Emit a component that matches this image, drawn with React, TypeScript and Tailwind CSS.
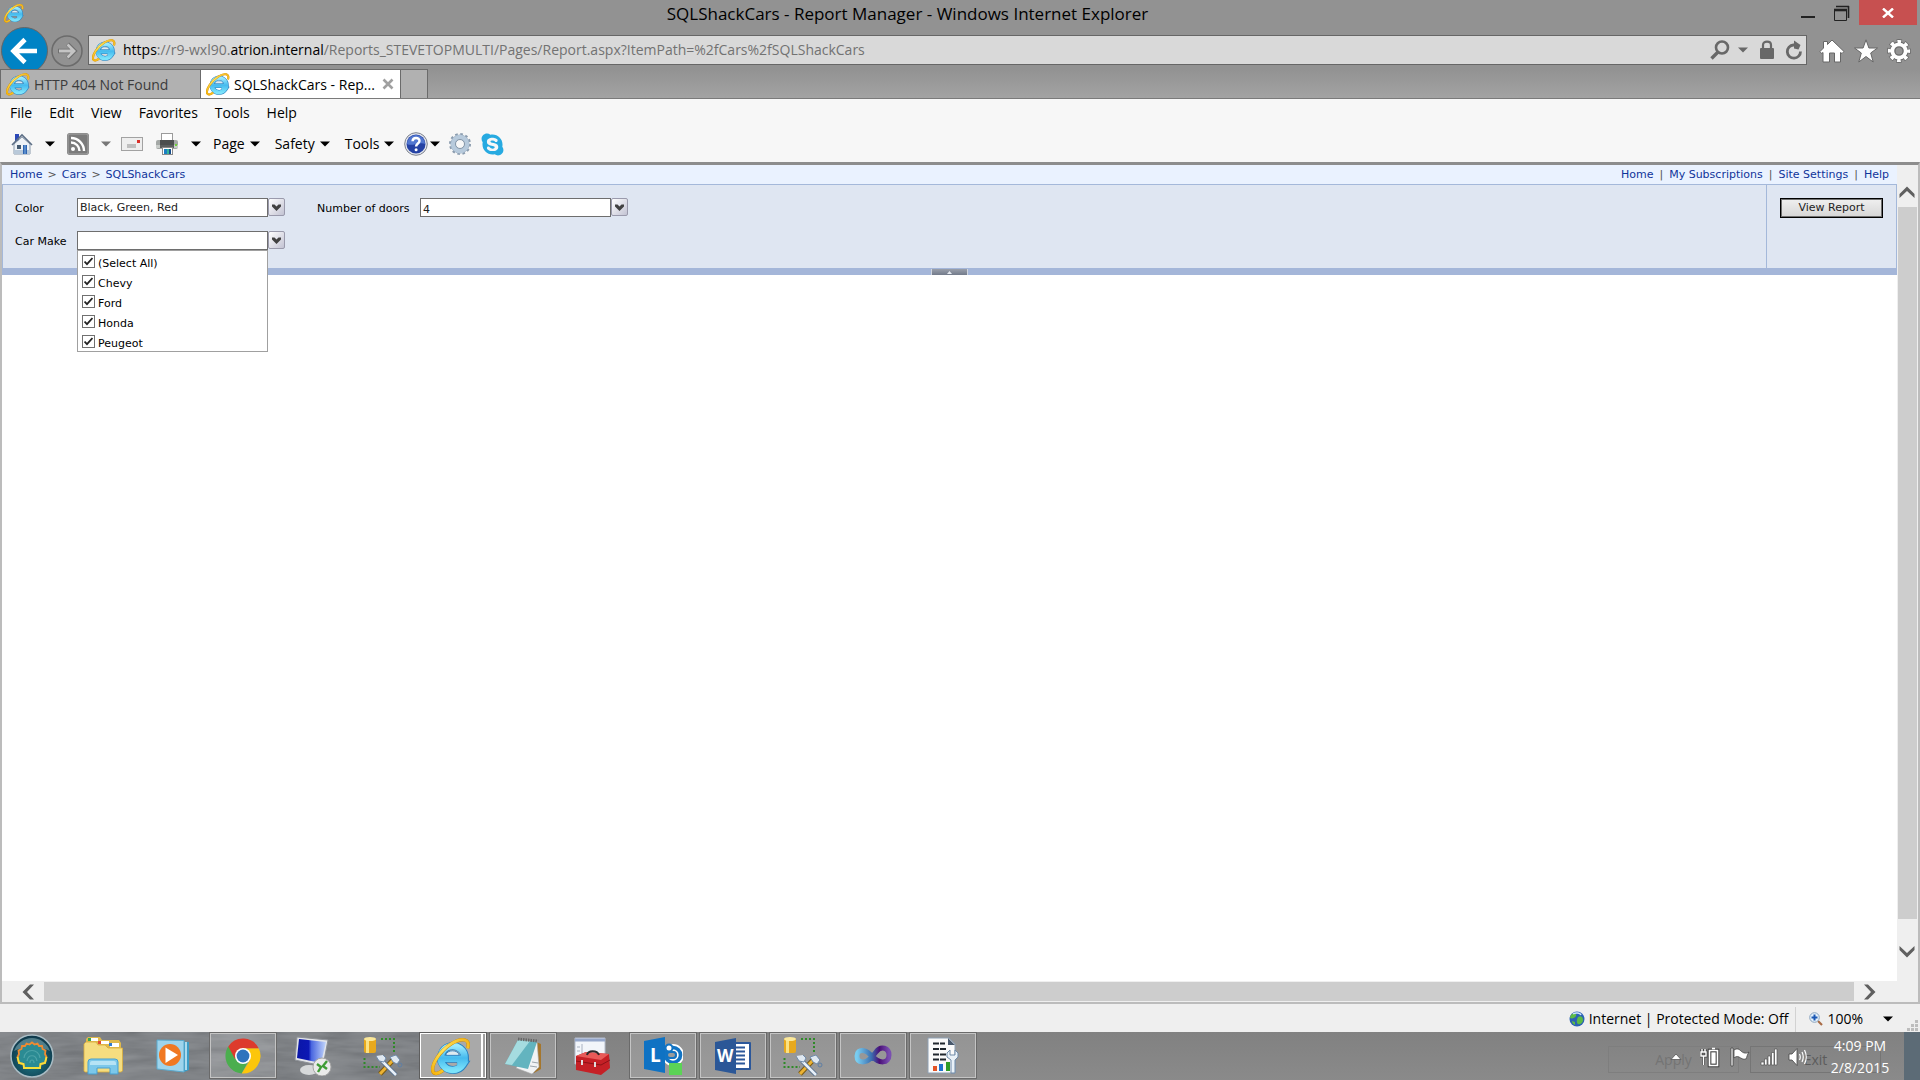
import { useState } from 'react';
import type { ReactNode } from 'react';
import { FaSkype } from 'react-icons/fa';

const MAKES = ['(Select All)', 'Chevy', 'Ford', 'Honda', 'Peugeot'];

function IeIcon({ className }: { className: string }) {
  return (
    <svg viewBox="0 0 24 24" fill="none" className={className} aria-hidden="true">
      <defs>
        <linearGradient id="ie-blue" x1="0" y1="0" x2="0" y2="1">
          <stop offset="0" stopColor="#9beafd" />
          <stop offset="0.5" stopColor="#45baee" />
          <stop offset="1" stopColor="#7be3fb" />
        </linearGradient>
        <linearGradient id="ie-gold" x1="0" y1="1" x2="1" y2="0">
          <stop offset="0" stopColor="#f6b30c" />
          <stop offset="0.5" stopColor="#ffe45c" />
          <stop offset="1" stopColor="#f3b51c" />
        </linearGradient>
      </defs>
      <path d="M6.5 13.6H20.4A7.2 7.2 0 1 0 19.2 17.2H15.5" stroke="#2a80bf" strokeWidth="4.8" />
      <path d="M6.5 13.6H20.2A7.2 7.2 0 1 0 19 17.2H15.7" stroke="url(#ie-blue)" strokeWidth="3.9" />
      <path d="M8.9 11.6C9.3 8 16.5 8 16.9 11.6Z" fill="#dfeaf0" stroke="#2a80bf" strokeWidth="0.5" />
      <path
        d="M22 7.4C23.8 1.4 18.4 0.8 12.2 4.6C5.2 9 -0.2 17.4 1.2 21.4C2 23.4 4.8 22.4 7.2 20.6"
        stroke="#c98a08"
        strokeWidth="2.1"
      />
      <path
        d="M22 7.4C23.8 1.4 18.4 0.8 12.2 4.6C5.2 9 -0.2 17.4 1.2 21.4C2 23.4 4.8 22.4 7.2 20.6"
        stroke="url(#ie-gold)"
        strokeWidth="1.7"
      />
    </svg>
  );
}

function Caret({ className = 'text-black' }: { className?: string }) {
  return (
    <svg viewBox="0 0 10 6" className={`h-[6px] w-[10px] shrink-0 ${className}`} aria-hidden="true">
      <path d="M0 0.5H10L5 5.5Z" fill="currentColor" />
    </svg>
  );
}

function HouseIcon() {
  return (
    <svg viewBox="0 0 22 22" className="h-[22px] w-[22px]" aria-hidden="true">
      <rect x="4" y="1" width="4" height="7" fill="#2c48b8" />
      <path d="M3 11L11 4L19 11V21H3Z" fill="#eef2f6" stroke="#8a9aac" />
      <path d="M3 17H19V21H3Z" fill="#b9c9d9" />
      <path d="M1 12L11 2L21 12" fill="none" stroke="#5d6f86" strokeWidth="1.6" />
      <rect x="6" y="12" width="4" height="4" fill="#445a70" />
      <rect x="12" y="12" width="4" height="9" fill="#2f64b0" />
      <path d="M14 12V21" stroke="#7fb0e6" />
    </svg>
  );
}

function FeedIcon() {
  return (
    <svg viewBox="0 0 22 22" fill="none" className="h-[22px] w-[22px]" aria-hidden="true">
      <rect width="22" height="22" rx="3" fill="#7b7b7b" />
      <rect x="1" y="1" width="20" height="20" rx="2" stroke="#a5a5a5" />
      <circle cx="6" cy="16" r="2" fill="#fff" />
      <path d="M4 9.5A8.5 8.5 0 0 1 12.5 18M4 5A13 13 0 0 1 17 18" stroke="#fff" strokeWidth="2.4" />
    </svg>
  );
}

function MailIcon() {
  return (
    <svg viewBox="0 0 22 16" className="h-[16px] w-[22px]" aria-hidden="true">
      <rect x="0.5" y="1.5" width="21" height="13" fill="#eeeeee" stroke="#a2a2a2" />
      <path d="M6 9H15M6 11H15" stroke="#8f8f8f" />
      <rect x="16" y="4" width="3" height="3" fill="#d9302a" />
    </svg>
  );
}

function PrinterIcon() {
  return (
    <svg viewBox="0 0 24 24" className="h-[24px] w-[24px]" aria-hidden="true">
      <rect x="6.5" y="1.5" width="11" height="9" fill="#fff" stroke="#9b9b9b" />
      <rect x="1" y="8" width="22" height="9" rx="2" fill="#a4a8a6" />
      <rect x="5" y="8" width="14" height="5" fill="#4b4e4f" />
      <rect x="1" y="13" width="22" height="3" fill="#c9cdca" />
      <rect x="5" y="13" width="14" height="3" fill="#5b5e5f" />
      <rect x="20" y="12" width="2" height="2" fill="#6fd13c" />
      <rect x="7.5" y="15.5" width="10" height="7" fill="#fff" stroke="#8a8a8a" />
      <path d="M9 17H12V22H9Z" fill="#1c7fc4" />
      <path d="M12 17H14V22H12Z" fill="#36b59a" />
      <path d="M14 17H16V22H14Z" fill="#174e8e" />
    </svg>
  );
}

function HelpIcon() {
  return (
    <svg viewBox="0 0 24 24" className="h-[24px] w-[24px]" aria-hidden="true">
      <circle cx="12" cy="12" r="11.3" fill="#e3e6ee" stroke="#7d828d" />
      <circle cx="12" cy="12" r="9.5" fill="#2542a4" />
      <path d="M3 12A9 9 0 0 1 21 12C16 9 8 15 3 12Z" fill="#5277d0" />
      <path d="M8.6 9.3C8.6 4.8 15.6 4.9 15.5 9C15.4 11.5 12.1 11.7 12.1 14.6" fill="none" stroke="#fff" strokeWidth="2.5" />
      <circle cx="12.1" cy="17.8" r="1.5" fill="#fff" />
    </svg>
  );
}

function SilverGear() {
  return (
    <svg viewBox="0 0 24 24" fill="none" className="h-[24px] w-[24px]" aria-hidden="true">
      <circle cx="12" cy="12" r="9.8" stroke="#8b9cae" strokeWidth="2.4" strokeDasharray="2.6 2.53" />
      <circle cx="12" cy="12" r="6.8" stroke="#91a5ba" strokeWidth="5.4" />
      <circle cx="12" cy="12" r="7" stroke="#b7cadc" strokeWidth="4.4" />
      <circle cx="12" cy="12" r="4.5" fill="#f7f7f7" stroke="#8496a8" />
    </svg>
  );
}

function WhiteGear() {
  return (
    <svg viewBox="0 0 24 24" fill="none" className="h-[24px] w-[24px]" aria-hidden="true">
      <circle cx="12" cy="12" r="9.5" stroke="#6a6a6a" strokeWidth="4.8" strokeDasharray="4.8 2.66" strokeDashoffset="2.4" />
      <circle cx="12" cy="12" r="6.5" stroke="#6a6a6a" strokeWidth="6" />
      <circle cx="12" cy="12" r="9.3" stroke="#fff" strokeWidth="3.6" strokeDasharray="3.6 3.704" strokeDashoffset="1.8" />
      <circle cx="12" cy="12" r="6.7" stroke="#fff" strokeWidth="3.8" />
    </svg>
  );
}

function ScrollArrow({ dir }: { dir: 'up' | 'down' | 'left' | 'right' }) {
  const turn = { up: '', down: 'rotate-180', left: '-rotate-90', right: 'rotate-90' }[dir];
  return (
    <svg viewBox="0 0 16 12" className={`h-[12px] w-[16px] ${turn}`} aria-hidden="true">
      <path d="M0.5 8L8 0.5L15.5 8V12L8 5L0.5 12Z" fill="#606060" />
    </svg>
  );
}

function TitleBar() {
  return (
    <header className="flex h-[35px] items-start bg-[#929292] pr-[3px] pl-1">
      <IeIcon className="mt-[3px] h-[20px] w-[20px]" />
      <h1 className="grow text-center text-[17px] leading-[28px] text-black">
        SQLShackCars - Report Manager - Windows Internet Explorer
      </h1>
      <button aria-label="Minimize" className="flex h-[25px] w-[34px] items-center justify-center">
        <svg viewBox="0 0 14 14" className="h-[14px] w-[14px]">
          <path d="M0 11H14" stroke="#222" strokeWidth="2" />
        </svg>
      </button>
      <button aria-label="Restore" className="flex h-[25px] w-[34px] items-center justify-center">
        <svg viewBox="0 0 16 16" fill="none" className="h-[16px] w-[16px]">
          <path d="M2 1.5H15M14.5 1V13" stroke="#222" strokeWidth="1.6" />
          <path d="M0.5 4V15.5H12.5V4" stroke="#222" />
          <path d="M0 5H13" stroke="#222" strokeWidth="2.6" />
        </svg>
      </button>
      <button aria-label="Close" className="flex h-[25px] w-[58px] items-center justify-center bg-[#c75050]">
        <svg viewBox="0 0 12 10" className="h-[10px] w-[12px]">
          <path d="M1 0.5L11 9.5M11 0.5L1 9.5" stroke="#fff" strokeWidth="2.4" />
        </svg>
      </button>
    </header>
  );
}

function AddressRow() {
  return (
    <div className="flex h-[34px] items-start bg-[#929292] pr-[9px]">
      <button aria-label="Back" className="-mt-2 ml-[1px] h-[42px] w-[47px] overflow-hidden">
        <svg viewBox="0 0 47 47" fill="none" className="h-[47px] w-[47px]">
          <circle cx="23.5" cy="23.5" r="23" fill="#0083c5" stroke="#656565" />
          <path d="M36 24H13M24 12.5L12.5 24L24 35.5" stroke="#fff" strokeWidth="4.6" />
        </svg>
      </button>
      <button aria-label="Forward" className="ml-[3px] h-[32px] w-[32px]">
        <svg viewBox="0 0 32 32" fill="none" className="h-[32px] w-[32px]">
          <circle cx="16" cy="16" r="15" stroke="#6b6b6b" strokeWidth="1.5" />
          <path d="M7 16H23M16.5 9L23.5 16L16.5 23" stroke="#6f6f6f" strokeWidth="4.4" />
          <path d="M8 16H23M16.5 9.5L23 16L16.5 22.5" stroke="#c4c4c4" strokeWidth="2.8" />
        </svg>
      </button>
      <div className="ml-[5px] flex h-[30px] grow items-center border border-[#666] bg-[#d9d9d9] pr-[3px] pl-[3px]">
        <IeIcon className="h-[24px] w-[24px] shrink-0" />
        <p className="ml-[7px] grow text-[14px] leading-[20px] text-[#727272]">
          <span className="text-black">https</span>://r9-wxl90.<span className="text-black">atrion.internal</span>
          /Reports_STEVETOPMULTI/Pages/Report.aspx?ItemPath=%2fCars%2fSQLShackCars
        </p>
        <button aria-label="Search">
          <svg viewBox="0 0 20 20" fill="none" className="h-[20px] w-[20px]">
            <circle cx="12" cy="7.5" r="6" stroke="#686868" strokeWidth="2.6" />
            <path d="M8 12L1.5 18.5" stroke="#686868" strokeWidth="3.4" />
          </svg>
        </button>
        <button aria-label="Search options" className="ml-2">
          <Caret className="text-[#686868]" />
        </button>
        <button aria-label="Security report" className="ml-3">
          <svg viewBox="0 0 14 20" fill="none" className="h-[20px] w-[14px]">
            <rect y="8" width="14" height="11" rx="1" fill="#686868" />
            <path d="M3 9V5C3 0.5 11 0.5 11 5V9" stroke="#686868" strokeWidth="2.2" />
          </svg>
        </button>
        <button aria-label="Refresh" className="ml-[11px]">
          <svg viewBox="0 0 18 20" fill="none" className="h-[20px] w-[18px]">
            <path d="M10 5H8.5A6.6 6.6 0 1 0 15.5 11.5" stroke="#686868" strokeWidth="2.8" />
            <path d="M9 0.5L15.5 5L13.5 9.5L9 8.5Z" fill="#686868" />
          </svg>
        </button>
      </div>
      <div className="ml-3 flex h-[32px] items-center gap-[9px]">
        <button aria-label="Home">
          <svg viewBox="0 0 26 24" className="h-[24px] w-[26px]">
            <path
              d="M13 1L25 12.5L23 14.5L21.5 13.5V23H15.5V14H10.5V23H4V13.5L2.5 14.5L1 12.5L4.5 9V2.5H8.5V5.5Z"
              fill="#fff"
              stroke="#666"
            />
          </svg>
        </button>
        <button aria-label="Favorites">
          <svg viewBox="0 0 24 24" className="h-[24px] w-[24px]">
            <path
              d="M12 0.8L14.9 9H23.5L16.7 14L19.2 23L12 17.5L4.8 23L7.3 14L0.5 9H9.1Z"
              fill="#fff"
              stroke="#666"
            />
          </svg>
        </button>
        <button aria-label="Tools">
          <WhiteGear />
        </button>
      </div>
    </div>
  );
}

function Tabs() {
  return (
    <div
      role="tablist"
      className="flex h-[30px] border-b border-[#7a7a7a] bg-linear-to-b from-[#929292] to-[#a3a3a3] text-[14px] whitespace-nowrap"
    >
      <button
        role="tab"
        aria-selected="false"
        className="flex w-[201px] items-center gap-1 border-t border-r border-l border-[#6b6b6b] bg-[#b1b1b1] pl-[5px] text-[#3c3c3c]"
      >
        <IeIcon className="h-[24px] w-[24px]" />
        HTTP 404 Not Found
      </button>
      <div className="flex w-[199px] items-center border-t border-[#6b6b6b] bg-white pl-[5px] text-black">
        <button role="tab" aria-selected="true" className="flex items-center gap-1">
          <IeIcon className="h-[24px] w-[24px]" />
          SQLShackCars - Rep...
        </button>
        <button aria-label="Close tab" className="mr-[6px] ml-auto">
          <svg viewBox="0 0 12 12" className="h-[12px] w-[12px]">
            <path d="M1.5 1.5L10.5 10.5M10.5 1.5L1.5 10.5" stroke="#a0a0a0" strokeWidth="2.6" />
          </svg>
        </button>
      </div>
      <button aria-label="New tab" className="w-[28px] border-t border-r border-l border-[#6b6b6b] bg-[#b1b1b1]" />
    </div>
  );
}

function CommandBars() {
  return (
    <div className="h-[63px] bg-[#f7f7f7] text-[14px] leading-[20px] text-black">
      <nav className="flex gap-[17px] px-[10px] pt-1">
        {['File', 'Edit', 'View', 'Favorites', 'Tools', 'Help'].map((item) => (
          <button key={item}>{item}</button>
        ))}
      </nav>
      <div className="mt-2 flex h-[26px] items-center pl-[11px]">
        <button aria-label="Home page" className="flex items-center gap-3">
          <HouseIcon />
          <Caret />
        </button>
        <button aria-label="Feeds" className="ml-3 flex items-center gap-3">
          <FeedIcon />
          <Caret className="text-[#777]" />
        </button>
        <button aria-label="Read mail" className="ml-[10px]">
          <MailIcon />
        </button>
        <button aria-label="Print" className="ml-3 flex items-center gap-3">
          <PrinterIcon />
          <Caret />
        </button>
        <div className="ml-3 flex gap-[15px]">
          {['Page', 'Safety', 'Tools'].map((item) => (
            <button key={item} className="flex items-center gap-[5px]">
              {item}
              <Caret />
            </button>
          ))}
        </div>
        <button aria-label="Help" className="ml-[10px] flex items-center gap-[2px]">
          <HelpIcon />
          <Caret />
        </button>
        <button aria-label="Developer tools" className="ml-2">
          <SilverGear />
        </button>
        <button aria-label="Skype" className="ml-2">
          <FaSkype className="h-[25px] w-[25px] text-[#27aae1]" />
        </button>
      </div>
    </div>
  );
}

function DropButton({ label, onClick }: { label: string; onClick?: () => void }) {
  return (
    <button
      aria-label={label}
      onClick={onClick}
      className="flex h-[18px] w-[17px] items-center justify-center rounded-[2px] border border-[#9a9aac] bg-linear-to-br from-white to-[#c3c3d3]"
    >
      <svg viewBox="0 0 9 7" className="h-[7px] w-[9px]">
        <path d="M0 0.5H2.5L4.5 2.5L6.5 0.5H9V2.5L4.5 7L0 2.5Z" fill="#414141" />
      </svg>
    </button>
  );
}

function MakeList() {
  const [checked, setChecked] = useState<Record<string, boolean>>({});
  return (
    <div className="absolute top-[19px] left-0 z-10 w-[191px] border border-[#a0a0a0] bg-white pl-1">
      {MAKES.map((make) => {
        const on = checked[make] ?? true;
        return (
          <label key={make} className="flex h-[20px] items-start gap-[3px] pt-1">
            <span className="relative flex h-[13px] w-[13px] items-center justify-center">
              <input
                type="checkbox"
                checked={on}
                onChange={(e) => setChecked({ ...checked, [make]: e.target.checked })}
                className="h-[13px] w-[13px] appearance-none border border-[#707070] bg-white"
              />
              {on && (
                <svg viewBox="0 0 9 9" fill="none" className="pointer-events-none absolute h-[9px] w-[9px]">
                  <path d="M0.5 4.5L3 7.2L8.5 1" stroke="#222" strokeWidth="1.8" />
                </svg>
              )}
            </span>
            <span className="leading-[17px]">{make}</span>
          </label>
        );
      })}
    </div>
  );
}

function Parameters() {
  const [open, setOpen] = useState(true);
  const field = 'h-[19px] w-[191px] appearance-none border border-[#6e6e6e] bg-white px-[2px] text-[#222] outline-none';
  return (
    <section className="flex border-x border-t border-[#a4b8da] bg-[#dfe6f2] text-black">
      <div className="grid h-[83px] grow auto-rows-[19px] grid-cols-[62px_209px_134px_auto] content-start justify-start gap-y-[14px] pt-[13px] pl-3 leading-[21px]">
        <label htmlFor="color">Color</label>
        <div className="flex">
          <input id="color" readOnly value="Black, Green, Red" className={field} />
          <DropButton label="Choose colors" />
        </div>
        <label htmlFor="doors" className="pl-[31px] whitespace-nowrap">
          Number of doors
        </label>
        <div className="flex">
          <select id="doors" defaultValue="4" className={field}>
            <option>2</option>
            <option>4</option>
          </select>
          <DropButton label="Choose number of doors" />
        </div>
        <label htmlFor="make">Car Make</label>
        <div className="relative flex">
          <input id="make" readOnly value="" className={field} />
          <DropButton label="Choose car makes" onClick={() => setOpen(!open)} />
          {open && <MakeList />}
        </div>
      </div>
      <div className="w-[130px] border-l border-[#a4b8da] pt-[13px] pl-[13px]">
        <button className="h-[20px] w-[103px] border border-black bg-linear-to-b from-[#f0f0f0] to-[#d6d6d6] leading-[18px] text-[#222] outline-1 -outline-offset-2 outline-[#707070]">
          View Report
        </button>
      </div>
    </section>
  );
}

function ReportPage() {
  return (
    <main className="flex min-w-0 grow flex-col bg-white font-['DejaVu_Sans',Verdana,sans-serif] text-[11px] leading-[19px]">
      <div className="flex justify-between bg-[#eaf2ff] px-2 text-[#555]">
        <nav className="flex gap-[5px]">
          <a href="#home" className="text-[#10349a]">Home</a>&gt;
          <a href="#cars" className="text-[#10349a]">Cars</a>&gt;
          <a href="#report" className="text-[#10349a]">SQLShackCars</a>
        </nav>
        <nav className="flex gap-[6px]">
          <a href="#home" className="text-[#10349a]">Home</a>|
          <a href="#subscriptions" className="text-[#10349a]">My Subscriptions</a>|
          <a href="#settings" className="text-[#10349a]">Site Settings</a>|
          <a href="#help" className="text-[#10349a]">Help</a>
        </nav>
      </div>
      <Parameters />
      <div className="flex h-[7px] justify-center bg-[#a4b6d9]">
        <button
          aria-label="Hide parameters"
          className="flex h-[6px] w-[37px] items-center justify-center self-end border-x border-[#d0d6e0] bg-linear-to-b from-[#9aa0ac] to-[#737b8b]"
        >
          <svg viewBox="0 0 5 3" className="h-[3px] w-[5px]">
            <path d="M0 3L2.5 0L5 3Z" fill="#e5e9f0" />
          </svg>
        </button>
      </div>
    </main>
  );
}

function StatusBar() {
  return (
    <footer className="flex h-[28px] items-center justify-end bg-[#efefef] pt-[2px] text-[14px] leading-[20px] text-black">
      <svg viewBox="0 0 16 16" className="mr-1 h-[16px] w-[16px]" aria-hidden="true">
        <circle cx="8" cy="8" r="7.5" fill="#2b62b5" />
        <path
          d="M3 3C6 1 8 3 7 5S3 8 1 7C1 5 2 4 3 3ZM9 6C12 4 14 6 14 9S11 14 9 13S8 8 9 6ZM3 10L6 11L6 14C4 13 3 12 3 10Z"
          fill="#5dbb46"
        />
        <path d="M4 3C7 1 11 2 12 4" stroke="#cfe4ff" strokeWidth="1.5" fill="none" />
      </svg>
      <span>Internet | Protected Mode: Off</span>
      <div className="ml-[7px] flex h-[25px] items-center border-l border-[#d2d2d2] pl-[13px]">
        <svg viewBox="0 0 14 14" fill="none" className="h-[14px] w-[14px]" aria-hidden="true">
          <path d="M9 9L13 13" stroke="#a86b45" strokeWidth="2.2" />
          <circle cx="5.5" cy="5.5" r="4.8" fill="#e4f0fb" stroke="#8aa4be" />
          <path d="M5.5 2.5V8.5M2.5 5.5H8.5" stroke="#1b58b4" strokeWidth="2" />
        </svg>
        <button className="ml-1 flex items-center gap-5" aria-label="Zoom level">
          100%
          <Caret />
        </button>
      </div>
      <svg viewBox="0 0 12 12" className="mr-[1px] ml-[14px] h-[12px] w-[12px] self-end" aria-hidden="true">
        <path
          d="M8 0H11V3H8ZM4 4H7V7H4ZM8 4H11V7H8ZM0 8H3V11H0ZM4 8H7V11H4ZM8 8H11V11H8Z"
          fill="#bdbdbd"
        />
      </svg>
    </footer>
  );
}

function StartOrb() {
  return (
    <svg viewBox="0 0 44 44" fill="none" className="h-[44px] w-[44px]">
      <defs>
        <radialGradient id="orb" cx="0.5" cy="0.6" r="0.6">
          <stop offset="0" stopColor="#1f7f8d" />
          <stop offset="1" stopColor="#0e3547" />
        </radialGradient>
      </defs>
      <circle cx="22" cy="22" r="21" fill="url(#orb)" stroke="#a9bcc4" strokeWidth="1.5" />
      <path d="M4 17A19 19 0 0 1 40 17C30 12 14 12 4 17Z" fill="#7ba5ad" opacity="0.6" />
      <path
        d="M14 34L13.5 30L9 29L7.5 23L9 20L8.5 16.5L11.5 15L12 12L15 12L16.5 9.5L19.5 10.5L22 8.5L24.5 10.5L27.5 9.5L29 12L32 12L32.5 15L35.5 16.5L35 20L36.5 23L35 29L30.5 30L30 34Z"
        fill="#2b8b93"
        stroke="#f08a30"
        strokeWidth="1.8"
      />
      <path d="M7.5 23L9 29L13.5 30L14 34H30L30.5 30L35 29L36.5 23" stroke="#f7e03a" strokeWidth="1.8" />
      <path
        d="M14 24C15 14 29 14 30 24M17 27C18 20 26 20 27 27M20 29C20 25 24 25 24 29"
        stroke="#4da3a8"
        strokeWidth="1.2"
      />
    </svg>
  );
}

function FolderIcon() {
  return (
    <svg viewBox="0 0 40 40" fill="none" className="h-[40px] w-[40px]">
      <path d="M3 3L5 1H17L19 4H36L38 7V35H3Z" fill="#dfb94c" />
      <rect x="7" y="2" width="8" height="3" fill="#fff" />
      <rect x="5" y="2" width="3" height="3" fill="#37a552" />
      <rect x="17" y="5" width="9" height="3" fill="#fff" />
      <rect x="15" y="5" width="3" height="3" fill="#e24b32" />
      <rect x="27" y="7" width="9" height="4" fill="#fff" />
      <rect x="26" y="7" width="3" height="3" fill="#2f7bd0" />
      <path d="M1 8L3 6H13L15 9H22L25 12H39.5V35L38 36H2L1 35Z" fill="#f5dd80" stroke="#d9ad3c" strokeWidth="0.8" />
      <path d="M5 38V26Q5 23 8 23H32Q35 23 35 26V38H27V32H14V38Z" fill="#7cc8ea" stroke="#469fd0" />
      <path d="M7 29V27Q7 25 9 25H31Q33 25 33 27V29Z" fill="#b6e3f5" />
    </svg>
  );
}

function MediaIcon() {
  return (
    <svg viewBox="0 0 34 34" className="h-[34px] w-[34px]">
      <path d="M10 2L33 3V31L28 33Z" fill="#3c9cc5" />
      <path d="M1 1L28 1.5V33L1 30Z" fill="#9ed4ec" stroke="#5aa9cd" />
      <path d="M30 3V31" stroke="#d3effa" strokeWidth="1.5" />
      <circle cx="14" cy="16" r="11" fill="#f07822" />
      <path d="M9.5 8.5L22 16L9.5 24Z" fill="#fff" />
    </svg>
  );
}

function ChromeIcon() {
  return (
    <svg viewBox="0 0 36 36" className="h-[36px] w-[36px]">
      <path d="M18 18L3.3 8.4A17.5 17.5 0 0 0 16.7 35.4L24 22Z" fill="#4bae4e" />
      <path d="M16.7 35.4A17.5 17.5 0 0 0 33.7 10.3H18L25 22Z" fill="#fcc60b" />
      <path d="M3.3 8.4A17.5 17.5 0 0 1 33.7 10.3H18L10 21Z" fill="#dd3a2d" />
      <circle cx="18" cy="18" r="8" fill="#fff" />
      <circle cx="18" cy="18" r="6.4" fill="#2f74bd" />
    </svg>
  );
}

function RemoteIcon() {
  return (
    <svg viewBox="0 0 38 40" className="h-[40px] w-[38px]">
      <defs>
        <linearGradient id="screen" x1="0" y1="0" x2="1" y2="0">
          <stop offset="0" stopColor="#0a16a8" />
          <stop offset="0.4" stopColor="#0c18b4" />
          <stop offset="0.5" stopColor="#4a67e0" />
          <stop offset="1" stopColor="#c3d6fb" />
        </linearGradient>
      </defs>
      <ellipse cx="15" cy="34" rx="9" ry="5" fill="#d7d9da" />
      <path d="M3 1L34 4L29 30L1 24Z" fill="#e2e4e8" stroke="#8d9197" />
      <path d="M5 3L32 6L27 27L3 22Z" fill="url(#screen)" />
      <circle cx="28" cy="31" r="9" fill="#eaeaea" stroke="#a5a5a5" />
      <path d="M23 28L27 31L24 36M33 25L29 30L33 33" fill="none" stroke="#3f9c35" strokeWidth="2.4" />
    </svg>
  );
}

function DataToolsIcon() {
  return (
    <svg viewBox="0 0 40 40" fill="none" className="h-[40px] w-[40px]">
      <rect x="1" y="2" width="12" height="15" rx="2" fill="#e8a91d" />
      <rect x="3" y="4" width="3" height="13" fill="#fbe283" />
      <ellipse cx="7" cy="3" rx="6" ry="2" fill="#fbe89a" />
      <path d="M18 3H31V17M1.5 22V31H17" stroke="#2f8a28" strokeWidth="2" strokeDasharray="2 2" />
      <path d="M17 38L31 23" stroke="#7a5a12" strokeWidth="5" />
      <path d="M17 38L31 23" stroke="#ecb233" strokeWidth="3" />
      <path d="M19 25L33 39" stroke="#5a728f" strokeWidth="4.5" />
      <path d="M19 25L33 39" stroke="#e8f0f8" strokeWidth="2.5" />
      <path d="M13 20L16 25L21 26L23 22L20 19M27 21L33 19L37 24L34 28L30 26Z" fill="#dfe8f1" stroke="#708bab" />
      <circle cx="37" cy="29" r="2" stroke="#5f7fa5" />
    </svg>
  );
}

function NotepadIcon() {
  return (
    <svg viewBox="0 0 38 38" className="h-[38px] w-[38px]">
      <path d="M32 5L37 7V32L30 36Z" fill="#a5762c" />
      <path d="M33 4L35 30L28 37L12 31Z" fill="#f1f3f4" stroke="#a9a9a9" strokeWidth="0.6" />
      <path d="M14 3L33 5L24 32L1 27Z" fill="#63b4bf" />
      <path d="M14 3L26 4L8 28L1 27Z" fill="#a5dce0" />
      <path d="M14 2L34 4" stroke="#666" strokeWidth="3" strokeDasharray="1.5 1" />
      <path d="M28 25L34 26M26 29L33 30" stroke="#9ba5ac" />
    </svg>
  );
}

function ToolboxIcon() {
  return (
    <svg viewBox="0 0 38 40" className="h-[40px] w-[38px]">
      <path d="M1 2H31V28H1Z" fill="#f2f5fa" stroke="#b4bccb" />
      <path d="M1 4H31" stroke="#95a7cb" strokeWidth="3" />
      <path d="M8 8V20M3 11H6M3 15H6" stroke="#a9b2c2" />
      <path d="M2 20L12 16L35 18L36 32L27 39L2 34Z" fill="#c52026" />
      <path d="M2 20L12 16L35 18L27 24Z" fill="#e85a58" />
      <path d="M13 19C14 14 23 14 25 19" fill="none" stroke="#2b2b2b" strokeWidth="2" />
      <path d="M2 25L27 29L36 24" fill="none" stroke="#8d1217" />
      <path d="M8 24V29M21 26V31" stroke="#e0dede" strokeWidth="2" />
    </svg>
  );
}

function LyncIcon() {
  return (
    <svg viewBox="0 0 40 40" fill="none" className="h-[40px] w-[40px]">
      <circle cx="30" cy="19" r="7.5" stroke="#fff" strokeWidth="7" />
      <circle cx="30" cy="19" r="7.5" stroke="#1274c4" strokeWidth="3.6" />
      <circle cx="26" cy="12" r="3.5" fill="#fff" stroke="#1274c4" strokeWidth="2" />
      <rect x="24" y="16" width="9" height="6" rx="3" fill="#9b9b9b" stroke="#1274c4" strokeWidth="2" />
      <path d="M1 5L22 1V37L1 33Z" fill="#0f72c3" />
      <rect x="26" y="27" width="13" height="12" fill="#5bd356" />
      <text x="7" y="26" fontSize="19" fontWeight="700" fill="#fff">L</text>
    </svg>
  );
}

function WordIcon() {
  return (
    <svg viewBox="0 0 38 38" className="h-[38px] w-[38px]">
      <rect x="18" y="5" width="19" height="28" rx="1" fill="#2b579a" />
      <rect x="18" y="7" width="17" height="24" fill="#fff" />
      <path d="M20 10.5H31M20 14.5H31M20 18.5H31M20 22.5H31M20 26.5H31" stroke="#2b579a" strokeWidth="2" />
      <path d="M1 5L22 1V37L1 33Z" fill="#2b5797" />
      <text x="3" y="25" fontSize="17" fontWeight="700" fill="#fff">W</text>
    </svg>
  );
}

function StudioIcon() {
  return (
    <svg viewBox="0 0 40 24" fill="none" className="h-[24px] w-[40px]">
      <defs>
        <linearGradient id="loop" x1="0" y1="0" x2="1" y2="0">
          <stop offset="0" stopColor="#79cdf0" />
          <stop offset="0.45" stopColor="#3c6fb0" />
          <stop offset="0.7" stopColor="#4a0f78" />
          <stop offset="1" stopColor="#7a4fb0" />
        </linearGradient>
      </defs>
      <path
        d="M19 13C14 5 4 4 4 12C4 20 13 19 18 14L23 8C28 1 36 4 36 11C36 20 26 20 19 12"
        stroke="url(#loop)"
        strokeWidth="5"
      />
    </svg>
  );
}

function ReportIcon() {
  return (
    <svg viewBox="0 0 32 38" className="h-[38px] w-[32px]">
      <path d="M1 1H22L28 7V36H1Z" fill="#fafafa" stroke="#8ea0b4" />
      <path d="M21 1V8H28Z" fill="#48586c" />
      <path d="M6 6.5H18M6 12H20M6 17.5H20M6 22.5H20" stroke="#20272e" strokeWidth="2.2" strokeDasharray="6 1" />
      <rect x="6" y="29" width="4" height="5" fill="#e35325" />
      <rect x="12" y="27" width="4" height="7" fill="#1f74d0" />
      <rect x="19" y="25" width="4" height="9" fill="#2f9c27" />
      <path d="M23 13L20 16V20L24 23V36H28V23L31 20V16L28 13V18H23Z" fill="#e9f1f8" stroke="#6f8aa8" />
    </svg>
  );
}

function TaskButton({ label, running, children }: { label: string; running?: boolean; children: ReactNode }) {
  return (
    <button
      aria-label={label}
      className={`flex h-[47px] w-[68px] items-center justify-center border ${
        running ? 'border-[#6a6a6a] bg-white/15 ring-1 ring-[#c4c4c4] ring-inset' : 'border-transparent'
      }`}
    >
      {children}
    </button>
  );
}

function Tray() {
  return (
    <div className="ml-auto flex h-full">
      <div className="relative flex items-center pt-[2px] pr-3 text-white">
        <div
          className="absolute top-[14px] right-[23px] flex gap-[11px] text-[14px] leading-[25px] text-[#5c5c5c]"
          aria-hidden="true"
        >
          <span className="w-[131px] border border-[#7e7e7e] text-center text-[#747474]">Apply</span>
          <span className="w-[131px] border border-[#757575] text-center">Exit</span>
        </div>
        <div className="relative mr-5 flex items-center gap-[10px]">
          <svg viewBox="0 0 12 8" className="mr-2 h-[8px] w-[12px]">
            <path d="M1 6.5L6 1L11 6.5Z" fill="#fff" stroke="#555" strokeWidth="0.8" />
          </svg>
          <svg viewBox="0 0 20 22" fill="none" className="h-[22px] w-[20px]">
            <path d="M1 6H6V10H1ZM2 3V6M5 3V6M3.5 10V19" stroke="#444" strokeWidth="3" />
            <rect x="9.5" y="4.5" width="8" height="15" stroke="#444" strokeWidth="3.6" />
            <path d="M1 6H6V10H1ZM2 3V6M5 3V6M3.5 10V19" stroke="#fff" strokeWidth="1.4" />
            <path d="M9.5 4.5H17.5V19.5H9.5ZM12 2.5H15" stroke="#fff" strokeWidth="1.6" />
            <rect x="11.5" y="6.5" width="4" height="11" fill="#fff" />
          </svg>
          <svg viewBox="0 0 20 22" className="h-[22px] w-[20px]">
            <path d="M1 2H3V20H1Z" fill="#fff" stroke="#444" strokeWidth="0.8" />
            <path
              d="M4 4C7 2 9 3 11 5C13 7 16 8 19 6C17 9 17 11 16 13C13 14 11 12 9 11C7 10 5 11 4 12Z"
              fill="#fff"
              stroke="#444"
              strokeWidth="0.8"
            />
          </svg>
          <svg viewBox="0 0 18 20" className="h-[20px] w-[18px]">
            <path
              d="M1 15H4V18H1ZM4.5 12H7V18H4.5ZM8 9H10.5V18H8ZM11.5 5.5H14V18H11.5ZM14.5 2H17V18H14.5Z"
              fill="#fff"
              stroke="#555"
              strokeWidth="0.7"
            />
          </svg>
          <svg viewBox="0 0 20 20" fill="none" className="h-[20px] w-[20px]">
            <path d="M1 7H4L9 1.5V18.5L4 13H1Z" fill="#fff" stroke="#444" strokeWidth="0.8" />
            <path
              d="M11.5 7Q13 10 11.5 13M14 5Q16.5 10 14 15M16.5 3Q20 10 16.5 17"
              stroke="#fff"
              strokeWidth="1.2"
            />
          </svg>
        </div>
        <time className="relative w-[64px] text-center text-[14px] leading-[22px]">
          4:09 PM
          <br />
          2/8/2015
        </time>
      </div>
      <div className="w-4 bg-[#5c6b76]" />
    </div>
  );
}

function Taskbar() {
  return (
    <div className="flex h-[48px] shrink-0 overflow-hidden bg-linear-to-b from-[#818181] to-[#8a8a8a]">
      <div className="relative flex gap-[2px] overflow-hidden bg-[#676b70] pr-[2px]">
        <svg className="absolute inset-0 h-full w-full opacity-25" aria-hidden="true">
          <filter id="clouds">
            <feTurbulence type="fractalNoise" baseFrequency="0.02 0.12" numOctaves="3" seed="4" />
            <feColorMatrix type="matrix" values="0.7 0.7 0 0 -0.1  0.7 0.7 0 0 -0.1  0.7 0.7 0 0 -0.1  0 0 0 0 1" />
          </filter>
          <rect width="100%" height="100%" filter="url(#clouds)" />
        </svg>
        <button aria-label="Start" className="relative flex h-[47px] w-[67px] items-center pl-[10px]">
          <StartOrb />
        </button>
        <div className="relative flex gap-[2px]">
          <TaskButton label="File Explorer"><FolderIcon /></TaskButton>
          <TaskButton label="Windows Media Player"><MediaIcon /></TaskButton>
          <TaskButton label="Chrome" running><ChromeIcon /></TaskButton>
          <TaskButton label="Remote Desktop"><RemoteIcon /></TaskButton>
          <TaskButton label="SQL Server Management Studio"><DataToolsIcon /></TaskButton>
        </div>
      </div>
      <div className="flex gap-[2px]">
        <button aria-label="Internet Explorer" className="flex h-[47px] w-[68px] border border-[#5e5e5e]">
          <span className="flex h-full w-[62px] items-center justify-center border border-white bg-[#a9a9a9]">
            <IeIcon className="h-[40px] w-[40px]" />
          </span>
          <span className="h-full grow border border-white bg-[#a0a0a0]" />
        </button>
        <TaskButton label="Notepad" running><NotepadIcon /></TaskButton>
        <TaskButton label="Configuration Manager"><ToolboxIcon /></TaskButton>
        <TaskButton label="Lync" running><LyncIcon /></TaskButton>
        <TaskButton label="Word" running><WordIcon /></TaskButton>
        <TaskButton label="SQL Server Data Tools" running><DataToolsIcon /></TaskButton>
        <TaskButton label="Visual Studio" running><StudioIcon /></TaskButton>
        <TaskButton label="Report Builder" running><ReportIcon /></TaskButton>
      </div>
      <Tray />
    </div>
  );
}

export default function App() {
  return (
    <div className="flex h-screen flex-col overflow-hidden bg-white font-['Open_Sans','Noto_Sans',sans-serif]">
      <TitleBar />
      <AddressRow />
      <Tabs />
      <CommandBars />
      <div className="flex min-h-0 grow flex-col border-2 border-t-[3px] border-[#bcbcbc] border-t-[#8d8d8d] bg-[#efefef]">
        <div className="flex min-h-0 grow">
          <ReportPage />
          <div className="flex w-[21px] flex-col items-center pr-[1px] pb-[20px]">
            <button aria-label="Scroll up" className="flex h-[42px] items-center pt-3">
              <ScrollArrow dir="up" />
            </button>
            <div className="w-[19px] grow bg-[#cdcdcd]" />
            <button aria-label="Scroll down" className="flex h-[42px] items-center pt-6">
              <ScrollArrow dir="down" />
            </button>
          </div>
        </div>
        <div className="flex h-[21px] items-center pr-[22px]">
          <button aria-label="Scroll left" className="flex w-[42px] justify-center pl-[10px]">
            <ScrollArrow dir="left" />
          </button>
          <div className="h-[19px] grow bg-[#cdcdcd]" />
          <button aria-label="Scroll right" className="flex w-[42px] justify-center pr-[10px]">
            <ScrollArrow dir="right" />
          </button>
        </div>
      </div>
      <StatusBar />
      <Taskbar />
    </div>
  );
}
